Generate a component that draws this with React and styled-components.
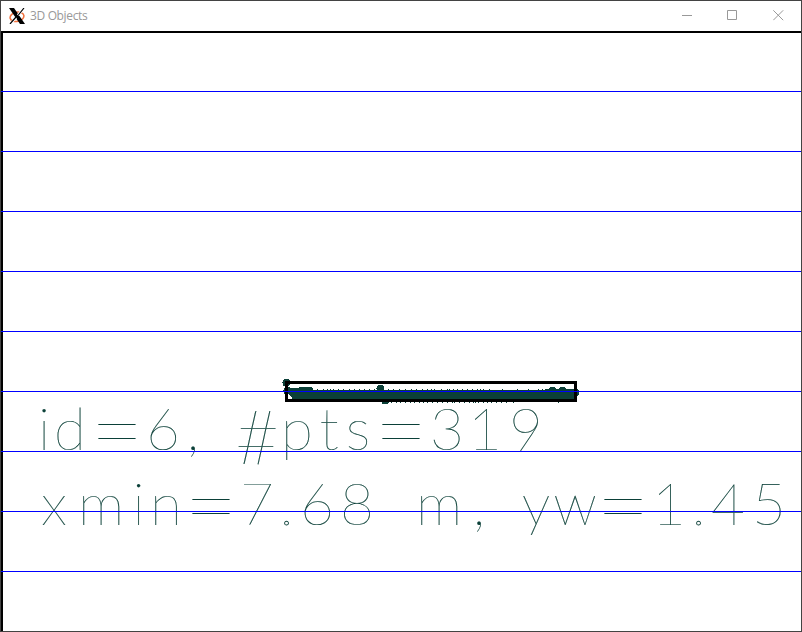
import React from 'react';
import styled, { createGlobalStyle } from 'styled-components';

const GlobalStyle = createGlobalStyle`
  body { margin: 0; overflow: hidden; background: #fff; }
`;
const Window = styled.div`
  box-sizing: border-box;
  width: 802px;
  height: 632px;
  border: 1px solid #434343;
  display: flex;
  flex-direction: column;
  background: #fff;
`;
const TitleBar = styled.header`
  flex: none;
  box-sizing: border-box;
  height: 30px;
  padding-bottom: 1px;
  display: flex;
  align-items: center;
`;
const AppIcon = styled.svg`
  width: 16px;
  height: 16px;
  margin: 0 5px 0 8px;
`;
const Title = styled.span`
  flex: 1;
  font: 12px/16px "Open Sans", "Noto Sans", sans-serif;
  letter-spacing: -0.35px;
  padding-top: 1px;
  color: #999;
`;
const Controls = styled.div`
  display: flex;
`;
const ControlButton = styled.button`
  box-sizing: border-box;
  width: 45.5px;
  height: 29px;
  padding: 0;
  border: 0;
  background: none;
  display: flex;
  align-items: center;
  justify-content: center;
`;
const ControlIcon = styled.svg`
  width: 11px;
  height: 11px;
  fill: none;
  stroke: #999;
`;
const Scene = styled.svg`
  display: block;
  flex: none;
  width: 800px;
  height: 600px;
`;
const Cloud = styled.g`
  fill: #0b4038;
  shape-rendering: crispEdges;
`;
const Outline = styled.rect`
  fill: none;
  stroke: #000;
  shape-rendering: crispEdges;
`;
const GridLine = styled.rect`
  fill: #0000ff;
  shape-rendering: crispEdges;
`;
const Label = styled.text`
  font-family: Lato, "Open Sans", sans-serif;
  font-weight: 100;
  font-size: 58.5px;
  text-anchor: middle;
  fill: #0b4038;
  stroke: #0b4038;
  stroke-width: 0.2px;
  white-space: pre;
`;
const Equals = styled.tspan`
  font-size: 93px;
  stroke: none;
`;
const Hash = styled.tspan`
  font-size: 77px;
`;
const Dot = styled.tspan`
  fill: #fff;
  stroke-width: 0.9px;
`;

const gridRows = [91, 151, 211, 271, 331, 391, 451, 511, 571];
const points = [
  [286, 382], [287, 390], [292, 391], [296, 391], [301, 390], [305, 390], [309, 390],
  [380, 388], [385, 400], [547, 392], [552, 390], [557, 392], [562, 390], [567, 392], [571, 392], [575, 392],
];
const upper = [317, 323, 327, 330, 333, 338, 343, 349, 354, 359, 364, 369, 374, 388, 393, 399, 405, 411, 416, 422, 427, 431, 434, 441, 447, 449, 453, 457, 462, 467, 472, 477, 480, 483, 489, 502, 517, 528, 538, 542];
const lower = [391, 396, 400, 405, 410, 414, 419, 423, 427, 432, 437, 442, 447, 452, 454, 459, 464, 469, 473, 475, 478, 483, 487, 491, 496, 501, 506, 513, 558];

export default function App() {
  return (
    <>
      <GlobalStyle />
      <Window>
        <TitleBar>
          <AppIcon viewBox="0 0 16 16">
            <ellipse cx="8" cy="8.8" rx="7" ry="4.6" fill="none" stroke="#f2703c" strokeWidth="1.5" transform="rotate(-12 8 8.8)" />
            <path d="M0 0H5L16 16H11Z" fill="#000" />
            <path d="M14.8 0L9 7.2M7 9.5L1.2 16" stroke="#fff" strokeWidth="2.6" />
            <path d="M15 0L9 7.5M7 9L1 16" stroke="#000" strokeWidth="1.2" />
          </AppIcon>
          <Title>3D Objects</Title>
          <Controls>
            <ControlButton aria-label="Minimize">
              <ControlIcon viewBox="0 0 11 11"><path d="M0 5.5H10" /></ControlIcon>
            </ControlButton>
            <ControlButton aria-label="Maximize">
              <ControlIcon viewBox="0 0 11 11"><path d="M.5 .5H9.5V9.5H.5Z" /></ControlIcon>
            </ControlButton>
            <ControlButton aria-label="Close">
              <ControlIcon viewBox="0 0 11 11"><path d="M.3 .3L10.2 10.2M10.2 .3L.3 10.2" /></ControlIcon>
            </ControlButton>
          </Controls>
        </TitleBar>
        <Scene viewBox="1 31 800 600">
          <Outline x="2" y="32" width="900" height="700" strokeWidth="2" />
          <Cloud>
            <path d="M286 390H577V400H293L289 393Z" />
            {upper.map((x) => <rect key={x} x={x} y="389" width="1" height="2" />)}
            {points.map(([x, y]) => <circle key={`${x}-${y}`} cx={x + 0.5} cy={y + 0.5} r="4" />)}
            {lower.map((x) => <rect key={x} x={x} y="402" width="1" height="1" />)}
          </Cloud>
          <Outline x="286.5" y="382.5" width="289" height="18" strokeWidth="3" />
          <Label y="450">
            <tspan x="44">i</tspan><tspan x="70">d</tspan><Equals x="117" y="463">=</Equals><tspan x="163" y="450">6</tspan><tspan x="193">,</tspan><tspan x="215"> </tspan><Hash x="257" y="464">#</Hash><tspan x="297" y="450">p</tspan><tspan x="329">t</tspan><tspan x="358">s</tspan><Equals x="401" y="463">=</Equals><tspan x="447" y="450">3</tspan><tspan x="485">1</tspan><tspan x="526">9</tspan>
          </Label>
          <Label y="525">
            <tspan x="54">x</tspan><tspan x="101">m</tspan><tspan x="138.5">i</tspan><tspan x="166">n</tspan><Equals x="211" y="538">=</Equals><tspan x="257" y="525">7</tspan><Dot x="286.5">.</Dot><tspan x="317">6</tspan><tspan x="357">8</tspan><tspan x="390"> </tspan><tspan x="439">m</tspan><tspan x="479">,</tspan><tspan x="500"> </tspan><tspan x="536">y</tspan><tspan x="575">w</tspan><Equals x="623" y="538">=</Equals><tspan x="669" y="525">1</tspan><Dot x="698.5">.</Dot><tspan x="728">4</tspan><tspan x="769">5</tspan>
          </Label>
          {gridRows.map((y) => <GridLine key={y} x="1" y={y} width="800" height="1" />)}
        </Scene>
      </Window>
    </>
  );
}
